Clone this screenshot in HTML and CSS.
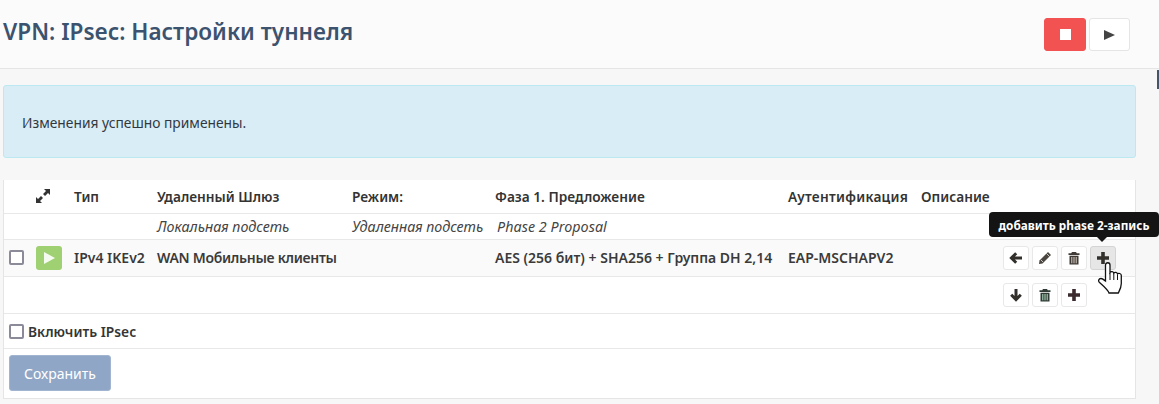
FILE: index.html
```html
<!DOCTYPE html>
<html lang="ru">
<head>
<meta charset="utf-8">
<title>VPN: IPsec: Настройки туннеля</title>
<link rel="stylesheet" href="styles.css">
</head>
<body>
<header class="page-head">
  <h1>VPN: IPsec: Настройки туннеля</h1>
  <div class="svc">
    <button class="svc-btn stop"><span class="square"></span></button>
    <button class="svc-btn play"><svg width="11" height="10" viewBox="0 0 11 10"><path d="M0 0l11 5-11 5z" fill="#444"/></svg></button>
  </div>
</header>
<div class="scrollmark"></div>
<main class="content">
  <div class="alert">Изменения успешно применены.</div>
  <section class="panel">
    <table class="grid">
      <colgroup>
        <col class="c1"><col class="c2"><col class="c3"><col class="c4"><col class="c5"><col class="c6"><col class="c7"><col class="c8">
      </colgroup>
      <tr class="r-head">
        <th></th>
        <th><svg class="expand" width="16" height="16" viewBox="0 0 16 16"><path d="M9 1h6v6l-2-2-3 3-2-2 3-3zM7 15H1V9l2 2 3-3 2 2-3 3z" fill="#333"/></svg></th>
        <th>Тип</th><th>Удаленный Шлюз</th><th>Режим:</th><th>Фаза 1. Предложение</th><th class="wide">Аутентификация</th><th>Описание</th>
      </tr>
      <tr class="r-sub">
        <td></td><td></td><td></td><td>Локальная подсеть</td><td>Удаленная подсеть</td><td class="prop">Phase 2 Proposal</td><td></td><td></td>
      </tr>
      <tr class="r-main">
        <td><span class="check"></span></td>
        <td><span class="status"><svg width="13" height="14" viewBox="0 0 13 14"><path d="M1 1l11 6-11 6z" fill="#fff" opacity=".9"/></svg></span></td>
        <td>IPv4 IKEv2</td><td class="tight">WAN Мобильные клиенты</td><td></td><td>AES (256 бит) + SHA256 + Группа DH 2,14</td><td>EAP-MSCHAPV2</td>
        <td>
          <div class="acts">
            <button class="act"><svg width="14" height="14" viewBox="0 0 14 14"><path d="M7.200 2.200L2.400 7l4.800 4.800M3 7h10" fill="none" stroke="#33302c" stroke-width="3"/></svg></button>
            <button class="act"><svg width="14" height="14" viewBox="0 0 14 14"><path d="M10 1l3 3-8.500 8.500L1 13l.5-3.500z" fill="#4b4640"/><path d="M8.500 2.500l3 3M3 9l2 2" stroke="#fff" stroke-width=".7"/></svg></button>
            <button class="act"><svg width="14" height="14" viewBox="0 0 14 14"><path d="M5 1h4l.8 1.300H12.500v1.700h-11V2.300h2.700zM2.500 4.800h9V13.500h-9z" fill="#3f3a36"/><path d="M4.800 6v6.300M7 6v6.300M9.200 6v6.300" stroke="#d9cfc6" stroke-width="1"/></svg></button>
            <button class="act hot"><svg width="14" height="14" viewBox="0 0 14 14"><path d="M5.200 1h3.600v4.200H13v3.600H8.800V13H5.200V8.800H1V5.200h4.200z" fill="#33302c"/></svg></button>
          </div>
        </td>
      </tr>
      <tr class="r-second">
        <td colspan="7"></td>
        <td>
          <div class="acts">
            <button class="act"><svg width="14" height="14" viewBox="0 0 14 14"><path d="M2.200 6.800L7 11.600l4.800-4.800M7 1v10" fill="none" stroke="#33302c" stroke-width="3"/></svg></button>
            <button class="act"><svg width="14" height="14" viewBox="0 0 14 14"><path d="M5 1h4l.8 1.300H12.500v1.700h-11V2.300h2.700zM2.500 4.800h9V13.500h-9z" fill="#2f3b34"/><path d="M4.800 6v6.300M7 6v6.300M9.200 6v6.300" stroke="#b7dfc4" stroke-width="1"/></svg></button>
            <button class="act"><svg width="14" height="14" viewBox="0 0 14 14"><path d="M5.200 1h3.600v4.200H13v3.600H8.800V13H5.200V8.800H1V5.200h4.200z" fill="#3b2a2e"/></svg></button>
          </div>
        </td>
      </tr>
      <tr class="r-enable">
        <td colspan="8"><label class="enable"><span class="check"></span><b>Включить IPsec</b></label></td>
      </tr>
      <tr class="r-save">
        <td colspan="8"><button class="save">Сохранить</button></td>
      </tr>
    </table>
  </section>
</main>
<div class="tip">добавить phase 2-запись</div>
<svg class="hand" width="25" height="32" viewBox="0 0 25 32"><path d="M7.500 3c0-3 4.500-3 4.500 0v7.500c1-1.500 3.500-1.200 3.800.6 1-1.300 3.400-1 3.700.8 1-1 3.800-.6 3.800 1.600v8c0 4-1.500 6.500-3 9.500H11c-1-3-5-6.500-9.500-10.500-1.500-1.500-1-4 1.500-4 1.500 0 3.200 1.500 4.500 2.500z" fill="#fff" stroke="#111" stroke-width="1.300"/><path d="M12 11v7M15.800 11.500V18M19.500 12.500V18" stroke="#111" stroke-width="1"/></svg>
</body>
</html>
```
FILE: styles.css
```css
* { box-sizing: border-box; }
html, body { margin: 0; height: 404px; overflow: hidden; }
body {
  background: #f7f7f7;
  font-family: "Noto Sans", "Open Sans", sans-serif;
  font-size: 13.7px;
  color: #353535;
  position: relative;
}
.page-head {
  height: 69px;
  background: #fbfbfb;
  border-bottom: 1px solid #e5e5e5;
  display: flex;
  justify-content: space-between;
  padding: 18px 29px 0 3px;
}
.page-head h1 {
  margin: 0;
  font-size: 22.6px;
  line-height: 28px;
  font-weight: 600;
  color: #3c5370;
}
.svc { display: flex; gap: 3px; }
.svc-btn {
  height: 33px;
  margin: 0;
  padding: 0;
  border-radius: 3px;
  display: flex;
  align-items: center;
  justify-content: center;
}
.svc-btn.stop { background: #f25252; border: 1px solid #f25252; width: 42px; }
.svc-btn.play { background: #fff; border: 1px solid #e5e5e5; width: 41px; }
.square { width: 11px; height: 11px; background: #fff; }
.scrollmark { position: absolute; left: 1157px; top: 70px; width: 2px; height: 19px; background: #44546a; }
.content { padding: 16px 23px 0 3px; }
.alert {
  height: 73px;
  background: #d9edf7;
  border: 1px solid #bce8f1;
  border-radius: 3px;
  padding: 2px 18px 0;
  display: flex;
  align-items: center;
  font-size: 13.8px;
  color: #31393f;
}
.panel {
  margin-top: 22px;
  background: #fff;
  border: 1px solid #e5e5e5;
  border-top: 0;
  height: 219px;
}
.grid { width: 100%; border-collapse: collapse; table-layout: fixed; }
.c1 { width: 27px; } .c2 { width: 38px; } .c3 { width: 83px; } .c4 { width: 195px; }
.c5 { width: 143px; } .c6 { width: 293px; } .c7 { width: 133px; }
.grid th, .grid td {
  padding: 0 0 0 5px;
  text-align: left;
  white-space: nowrap;
  border-bottom: 1px solid #e8e8e8;
}
.grid th { font-weight: 600; color: #333; }
.grid th.wide { letter-spacing: .28px; }
.r-head th { height: 33px; }
.r-sub td { height: 26px; font-size: 14.3px; font-style: italic; color: #444; }
.grid td.prop { padding-left: 7px; letter-spacing: .05px; }
.r-main td { height: 37px; font-size: 14px; font-weight: 600; color: #3a3a3a; background: #fafafa; }
.grid td.tight { letter-spacing: -.3px; }
.r-second td { height: 37px; }
.r-enable td { height: 35px; font-weight: 600; padding-top: 1px; }
.r-save td { border-bottom: 0; padding-top: 6px; vertical-align: top; }
.expand { display: block; margin-left: -1px; }
.check {
  display: block;
  width: 15px;
  height: 15px;
  background: #fff;
  border: 2px solid #8a8a99;
  border-radius: 2px;
}
.status {
  width: 26px;
  height: 24px;
  margin-left: 0;
  background: #9fd071;
  border-radius: 3px;
  display: flex;
  align-items: center;
  justify-content: center;
}
.acts { display: flex; gap: 3px; padding-left: 82px; }
.act {
  width: 26px;
  height: 24px;
  padding: 0;
  margin: 0;
  background: #fff;
  border: 1px solid #e8e8e8;
  border-radius: 3px;
  display: flex;
  align-items: center;
  justify-content: center;
}
.act.hot { background: #e6e6e6; border-color: #d4d4d4; }
.enable { display: flex; align-items: center; gap: 4px; font-size: 13.8px; }
.enable b { font-weight: 600; }
.save {
  width: 102px;
  height: 36px;
  padding: 1px 0 0;
  background: #8fa6c6;
  border: 1px solid #a2b5d0;
  border-radius: 3px;
  color: #fff;
  font: 14px "Noto Sans", sans-serif;
}
.tip {
  position: absolute;
  left: 989px;
  top: 212px;
  width: 170px;
  height: 25px;
  background: #141414;
  border-radius: 4px;
  color: #fff;
  font-size: 11.8px;
  font-weight: 700;
  line-height: 26px;
  text-align: center;
  white-space: nowrap;
}
.tip::after {
  content: "";
  position: absolute;
  left: 108px;
  top: 25px;
  border: 5px solid transparent;
  border-top-color: #141414;
  border-bottom: 0;
}
.hand { position: absolute; left: 1098px; top: 262px; }
```
